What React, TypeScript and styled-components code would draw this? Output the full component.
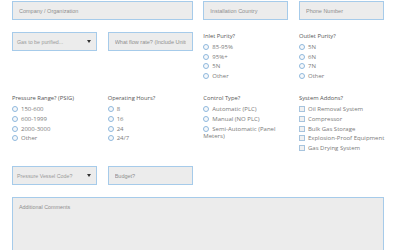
import React from "react";
import styled, { createGlobalStyle } from "styled-components";

const Global = createGlobalStyle`
  html, body { margin: 0; padding: 0; background: #fff; }
  body { font-family: "Open Sans", "Liberation Sans", sans-serif; }
  * { box-sizing: border-box; }
`;

const Form = styled.div`
  width: 400px;
  padding: 1px 16px 0 12px;
  display: flex;
  flex-direction: column;
  gap: 12px;
`;

const Row = styled.div`
  display: grid;
  grid-template-columns: repeat(4, 85px);
  column-gap: 10.67px;
  align-items: start;
`;

const Field = styled.input<{ $span?: number }>`
  grid-column: span ${(p) => p.$span || 1};
  height: 19px;
  width: 100%;
  background: #ececec;
  border: 1px solid #a6cbea;
  border-radius: 0;
  padding: 0 6px;
  font-family: "Liberation Sans", Arial, sans-serif;
  font-size: 5.5px;
  color: #555;
  outline: none;
  &::placeholder { color: #8f8f8f; }
`;

const SelectBox = styled.div`
  height: 19px;
  background: #ececec;
  border: 1px solid #a6cbea;
  padding: 0 5px 0 4px;
  display: flex;
  align-items: center;
  justify-content: space-between;
  font-family: "Liberation Sans", Arial, sans-serif;
  font-size: 5.3px;
  color: #9a9a9a;
`;

const Caret = styled.span`
  width: 0;
  height: 0;
  border-left: 2.5px solid transparent;
  border-right: 2.5px solid transparent;
  border-top: 3px solid #333;
`;

const Group = styled.div`
  display: flex;
  flex-direction: column;
`;

const GroupLabel = styled.div`
  font-size: 5.8px;
  line-height: 8px;
  color: #555;
  margin-bottom: 4px;
`;

const Option = styled.div<{ $nowrap?: boolean }>`
  font-size: 6px;
  line-height: 7.5px;
  min-height: 9.6px;
  color: #7a7a7a;
  white-space: ${(p) => (p.$nowrap ? "nowrap" : "normal")};
`;

const Radio = styled.span`
  display: inline-block;
  width: 6px;
  height: 6px;
  border-radius: 50%;
  border: 1px solid #8fb9dd;
  background: #f6f8fa;
  vertical-align: -1px;
  margin-right: 3px;
`;

const Check = styled.span`
  display: inline-block;
  width: 6px;
  height: 6px;
  border: 1px solid #a7c4de;
  background: #f1f1f1;
  vertical-align: -1px;
  margin-right: 3px;
`;

const Comments = styled.textarea`
  width: 372px;
  height: 80px;
  background: #ececec;
  border: 1px solid #a6cbea;
  border-radius: 0;
  padding: 6px 6px;
  font-family: "Liberation Sans", Arial, sans-serif;
  font-size: 5.4px;
  outline: none;
  &::placeholder { color: #8f8f8f; }
`;

const RadioGroup = ({ label, items }: { label: string; items: string[] }) => (
  <Group>
    <GroupLabel>{label}</GroupLabel>
    {items.map((i) => (
      <Option key={i}>
        <Radio />
        {i}
      </Option>
    ))}
  </Group>
);

const CheckGroup = ({ label, items }: { label: string; items: string[] }) => (
  <Group>
    <GroupLabel>{label}</GroupLabel>
    {items.map((i) => (
      <Option key={i} $nowrap>
        <Check />
        {i}
      </Option>
    ))}
  </Group>
);

export default function App() {
  return (
    <>
      <Global />
      <Form>
        <Row>
          <Field $span={2} placeholder="Company / Organization" />
          <Field placeholder="Installation Country" />
          <Field placeholder="Phone Number" />
        </Row>
        <Row>
          <SelectBox>
            <span>Gas to be purified...</span>
            <Caret />
          </SelectBox>
          <Field placeholder="What flow rate? (Include Units)" />
          <RadioGroup label="Inlet Purity?" items={["85-95%", "95%+", "5N", "Other"]} />
          <RadioGroup label="Outlet Purity?" items={["5N", "6N", "7N", "Other"]} />
        </Row>
        <Row>
          <RadioGroup label="Pressure Range? (PSIG)" items={["150-600", "600-1999", "2000-3000", "Other"]} />
          <RadioGroup label="Operating Hours?" items={["8", "16", "24", "24/7"]} />
          <RadioGroup
            label="Control Type?"
            items={["Automatic (PLC)", "Manual (NO PLC)", "Semi-Automatic (Panel Meters)"]}
          />
          <CheckGroup
            label="System Addons?"
            items={[
              "Oil Removal System",
              "Compressor",
              "Bulk Gas Storage",
              "Explosion-Proof Equipment",
              "Gas Drying System",
            ]}
          />
        </Row>
        <Row>
          <SelectBox>
            <span>Pressure Vessel Code?</span>
            <Caret />
          </SelectBox>
          <Field placeholder="Budget?" />
        </Row>
        <Comments placeholder="Additional Comments" />
      </Form>
    </>
  );
}
